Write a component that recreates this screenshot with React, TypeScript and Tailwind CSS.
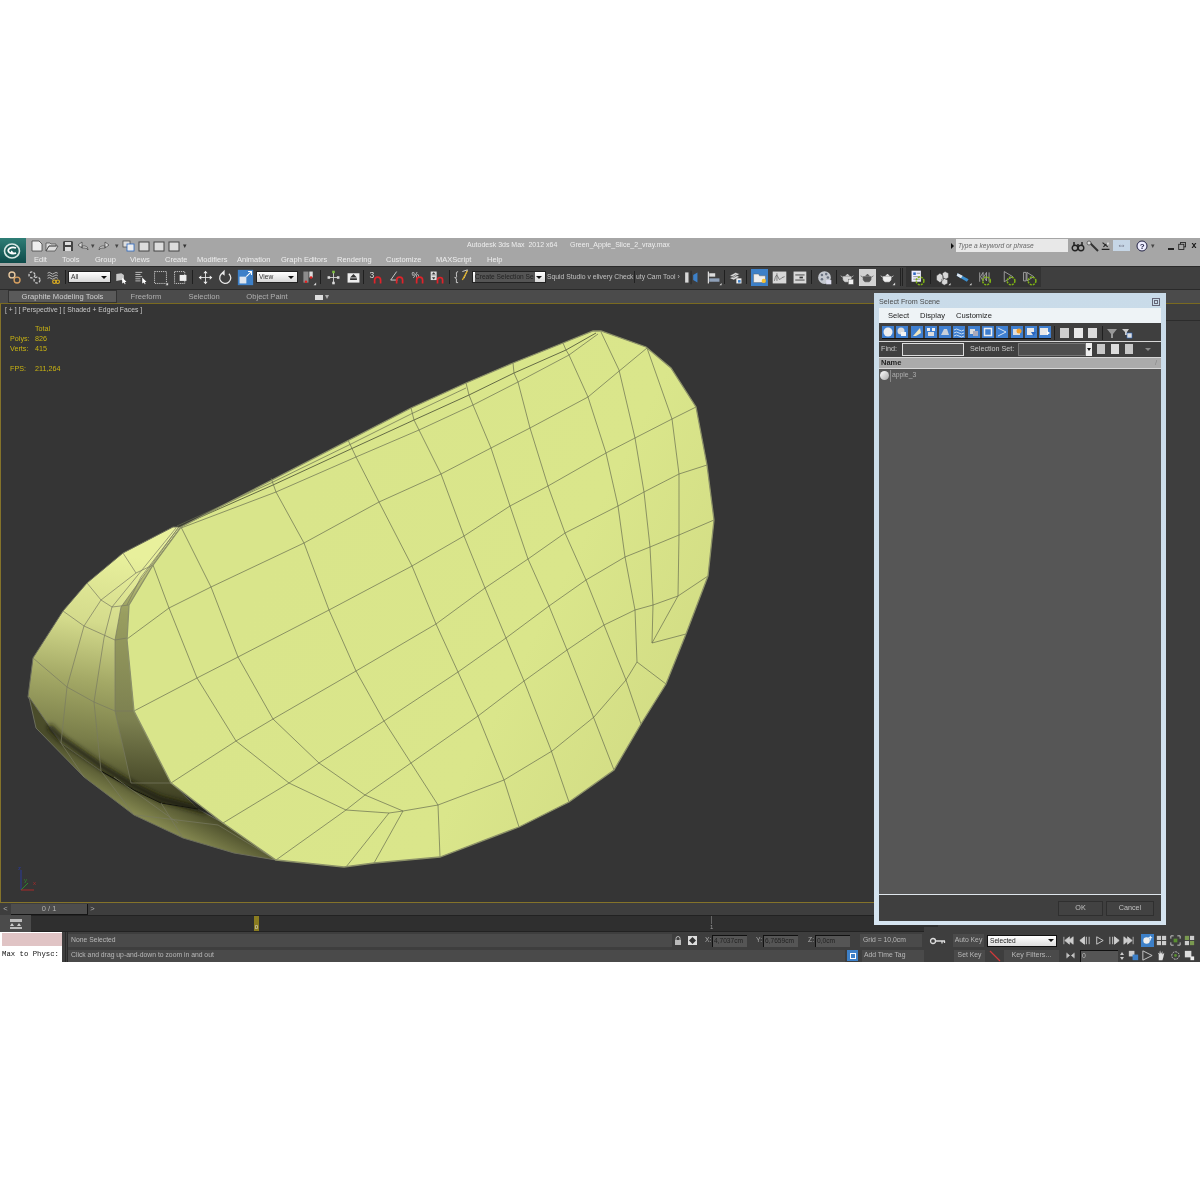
import { ReactNode } from "react"

const FRONT: [number, number][] = [[180,527],[152,565],[128,605],[126,640],[133,711],[170,783],[222,823],[275,860],[343,867],[373,863],[439,857],[518,827],[568,802],[613,770],[640,724],[665,684],[685,634],[707,576],[713,520],[706,465],[695,407],[670,368],[645,347],[600,331],[592,331],[562,343],[512,363],[465,383],[410,408]]

const WIRES = [
  "152,565 168,608 196,678 235,741 288,783 345,810 388,813 402,811",
  "180,527 210,587 237,657 272,719 318,763 364,795 402,811",
  "270,478 275,492 303,543 328,610 355,671 383,721 410,763 437,805 439,857",
  "347,440 355,457 378,502 411,566 435,624 457,672 477,716 503,780 518,827",
  "410,408 413,420 418,430 440,474 463,536 484,588 505,638 523,681 550,750 568,802",
  "465,383 468,395 472,405 490,448 509,506 527,559 548,606 566,650 592,716 613,770",
  "512,363 513,373 517,382 529,428 547,486 564,533 585,580 603,625 625,680 640,724",
  "562,343 565,350 568,355 587,397 605,453 617,506 624,557 634,610 636,662 665,684",
  "600,332 618,370 634,438 643,492 649,547 652,605 651,643 685,634",
  "646,348 671,419 678,474 678,535 677,596 651,643",
  "646,348 617,372 587,397 529,428 490,448 440,474 378,502 303,543 210,587 168,608 126,639",
  "695,407 671,419 634,438 605,453 547,486 509,506 463,536 411,566 328,610 237,657 196,678 133,711",
  "706,465 678,474 643,492 617,506 564,533 527,559 484,588 435,624 355,671 272,719 235,741 170,783",
  "713,520 678,535 649,547 624,557 585,580 548,606 505,638 457,672 383,721 318,763 288,783 222,823",
  "707,576 677,596 652,605 634,610 603,625 566,650 523,681 477,716 410,763 364,795 345,810 275,860",
  "636,662 625,680 593,717 551,751 503,780 437,805 402,811 373,863",
  "388,813 345,867",
  "180,528 275,492 355,457 418,430 472,405 517,382 568,355 597,334",
  "176,526 270,483 350,444 410,414 465,388",
]

const SIDE_WIRES = [
  "122,553 135,573 152,565",
  "86,583 100,600 111,607 128,605",
  "62,611 83,626 114,640 126,638",
  "32,658 66,687 93,702 114,711 133,711",
  "135,573 100,600 83,626 66,687 60,743",
  "175,528 111,607 103,638 93,702 100,771",
  "177,528 120,607 114,640 114,711 130,783",
  "60,743 83,777",
  "100,771 133,815",
  "113,777 177,823",
  "135,815 217,825 275,860",
  "130,783 170,783",
  "182,838 160,803",
  "178,527 140,577 126,605",
]

const pts = (list: [number, number][]) => list.map(p => p.join(",")).join(" ")

const Mesh = () => (
  <svg className="absolute left-0 top-0 h-[599px] w-[875px]" viewBox="0 304 875 599">
    <defs>
      <linearGradient id="side" gradientUnits="userSpaceOnUse" x1="118" y1="555" x2="85" y2="785">
        <stop offset="0" stopColor="#e8f09c" />
        <stop offset="0.3" stopColor="#d4db8c" />
        <stop offset="0.55" stopColor="#a4a966" />
        <stop offset="0.8" stopColor="#7a7e4a" />
        <stop offset="1" stopColor="#4a4c28" />
      </linearGradient>
      <linearGradient id="inner" gradientUnits="userSpaceOnUse" x1="150" y1="535" x2="130" y2="800">
        <stop offset="0" stopColor="#d8df8e" />
        <stop offset="0.3" stopColor="#999e60" />
        <stop offset="0.7" stopColor="#7c8050" />
        <stop offset="1" stopColor="#3c3d20" />
      </linearGradient>
      <linearGradient id="band" gradientUnits="userSpaceOnUse" x1="125" y1="775" x2="95" y2="835">
        <stop offset="0" stopColor="#4a4c2a" />
        <stop offset="0.5" stopColor="#8a8e54" />
        <stop offset="1" stopColor="#c2c87d" />
      </linearGradient>
      <linearGradient id="face" gradientUnits="userSpaceOnUse" x1="300" y1="500" x2="700" y2="700">
        <stop offset="0" stopColor="#d9e58b" />
        <stop offset="0.6" stopColor="#dae68b" />
        <stop offset="1" stopColor="#d2dc84" />
      </linearGradient>
      <filter id="soft" x="-20%" y="-20%" width="140%" height="140%">
        <feGaussianBlur stdDeviation="2.500" />
      </filter>
      <clipPath id="sideclip">
        <polygon points="172,527 122,553 86,583 62,611 32,658 27,697 35,728 83,777 133,815 182,838 233,853 275,860 222,823 170,783 133,711 126,640 128,605 152,565 180,527" />
      </clipPath>
    </defs>
    <polygon fill="url(#side)" stroke="#6c6e5c" strokeWidth="1" points="172,527 122,553 86,583 62,611 32,658 27,697 60,743 100,771 133,790 160,803 197,809 170,783 133,711 126,640 128,605 152,565 180,527" />
    <polygon fill="url(#inner)" points="177,528 152,565 128,605 126,640 133,711 170,783 197,809 160,803 130,783 114,711 114,640 120,607" />
    <polygon fill="url(#band)" stroke="#6c6e5c" strokeWidth="1" points="28,697 35,728 83,777 133,815 182,838 233,853 275,860 222,823 197,809 160,803 133,790 100,771 60,743" />
    <g clipPath="url(#sideclip)">
      <polyline points="48,726 60,738 100,766 133,786 160,799 205,811" fill="none" stroke="#1a1b0e" strokeWidth="5" filter="url(#soft)" />
      <polyline points="100,771 133,790 160,803 197,809" fill="none" stroke="#15160b" strokeWidth="1.200" />
    </g>
    {SIDE_WIRES.map(w => <polyline key={w} points={w} fill="none" stroke="#787a62" strokeWidth="0.7" />)}
    <polygon fill="url(#face)" points={pts(FRONT)} />
    <polyline points="177,527 272,485 352,448 413,420 468,395 513,373 565,350 595,333" fill="none" stroke="#474c34" strokeWidth="0.8" />
    {WIRES.map(w => <polyline key={w} points={w} fill="none" stroke="#686e50" strokeWidth="0.7" />)}
    <polygon fill="none" stroke="#8c9168" strokeWidth="1.300" points={pts(FRONT)} />
    <path d="M20 890V870" stroke="#2a3a9a" strokeWidth="1" />
    <path d="M20 890L27 883" stroke="#2c8a2c" strokeWidth="1" />
    <path d="M20 890H33" stroke="#a82a2a" strokeWidth="1" />
    <text x="17" y="870" fontSize="6" fill="#2a3a9a">z</text>
    <text x="23" y="882" fontSize="6" fill="#2c8a2c">y</text>
    <text x="32" y="885" fontSize="6" fill="#a82a2a">x</text>
  </svg>
)

const Ic = ({ children, className = "w-[20px]" }: { children: ReactNode; className?: string }) => (
  <div className={`flex h-[20px] shrink-0 items-center justify-center ${className}`}>
    <svg width="17" height="17" viewBox="0 0 20 20" className="shrink-0">{children}</svg>
  </div>
)

const Sep = ({ className = "w-[5px]" }: { className?: string }) => (
  <div className={`flex h-[14px] shrink-0 justify-center ${className}`}><div className="w-px bg-[#1f1f1f]" /></div>
)

const Drop = ({ label, className, dark }: { label: string; className: string; dark?: boolean }) => (
  <div className={`flex h-[12px] shrink-0 items-center justify-between border border-[#222] bg-gradient-to-b from-[#fff] to-[#d8d8d8] pl-[2px] pr-[3px] text-[6.600px] ${dark ? "text-[#222]" : "text-[#333]"} ${className}`}>
    <span className={dark ? "w-[60px] overflow-hidden whitespace-nowrap bg-[#555] pr-[1px] text-[#222]" : ""}>{label}</span>
    <span className="h-0 w-0 border-x-[3px] border-t-[3px] border-x-transparent border-t-[#111]" />
  </div>
)

const Magnet = ({ label }: { label: string }) => (
  <>
    <text x="3" y="10" fontSize="10" fill="#ddd">{label}</text>
    <path d="M9 17v-4a3 3 0 0 1 7 0v4" fill="none" stroke="#e0232a" strokeWidth="2" />
  </>
)

const Teapot = ({ fill = "#d4d4d4" }: { fill?: string }) => (
  <path d="M5 9h9a4 5 0 0 1-2 6H7a4 5 0 0 1-2-6zM5 10L2 8M14 10l3-2M8 8l2-2 2 2z" fill={fill} stroke={fill} strokeWidth="0.8" />
)

const Ring = ({ cx = 13, cy = 14 }: { cx?: number; cy?: number }) => (
  <circle cx={cx} cy={cy} r="4.500" fill="none" stroke="#7fb414" strokeWidth="1.800" strokeDasharray="2.400 1.200" />
)

const MainToolbar = () => (
  <div className="flex h-[24px] shrink-0 items-center border-y border-[#2a2a2a] bg-[#3f3f3f] pb-[2px] pl-[4px]">
    <Ic><circle cx="7" cy="7" r="3.500" fill="none" stroke="#e8c9a0" strokeWidth="1.600" /><circle cx="13" cy="13" r="3.500" fill="none" stroke="#d8a060" strokeWidth="1.600" /></Ic>
    <Ic><circle cx="7" cy="7" r="3.500" fill="none" stroke="#ccc" strokeWidth="1.500" strokeDasharray="3 1.500" /><circle cx="13" cy="13" r="3.500" fill="none" stroke="#ccc" strokeWidth="1.500" strokeDasharray="3 1.500" /></Ic>
    <Ic className="w-[19px]"><path d="M3 5q2-2 4 0t4 0 4 0M3 8q2-2 4 0t4 0 4 0M3 11q2-2 4 0t4 0 4 0" fill="none" stroke="#ccc" /><circle cx="11" cy="15" r="2" fill="none" stroke="#e0b020" strokeWidth="1.300" /><circle cx="15" cy="15" r="2" fill="none" stroke="#e0b020" strokeWidth="1.300" /></Ic>
    <Sep />
    <Drop label="All" className="w-[43px]" />
    <Ic className="ml-[-1px] w-[20px]"><path d="M5 6l6-1v8l-6 1zM11 5l3 2v7l-3-1z" fill="#c8c8c8" /><path d="M12 10l5 5-2 .5 1 2-1 .5-1-2-2 1z" fill="#fff" /></Ic>
    <Ic><path d="M4 4h8M4 6.500h6M4 9h8M4 11.500h6M4 14h6" stroke="#cfcfcf" /><path d="M12 10l5 5-2 .5 1 2-1 .5-1-2-2 1z" fill="#fff" /></Ic>
    <Ic><rect x="3" y="3" width="14" height="14" fill="none" stroke="#d8d8d8" strokeDasharray="1.500 1" /><path d="M16 19l3-3v3z" fill="#ddd" /></Ic>
    <Ic><rect x="3" y="3" width="12" height="14" fill="none" stroke="#d8d8d8" strokeDasharray="1.500 1" /><rect x="9" y="7" width="8" height="7" fill="#eee" /></Ic>
    <Sep />
    <Ic><path d="M10 3v14M3 10h14" stroke="#eee" /><path d="M10 2l2.500 3h-5zM10 18l2.500-3h-5zM2 10l3-2.500v5zM18 10l-3-2.500v5z" fill="#eee" /></Ic>
    <Ic><path d="M14 5.500A6.500 6.500 0 1 1 7 4.500" fill="none" stroke="#e8e8e8" strokeWidth="1.500" /><path d="M9 1v7l-4-3z" fill="#e8e8e8" /></Ic>
    <Ic className="w-[21px]"><rect x="1" y="1" width="18" height="18" fill="#3d80c8" /><rect x="3" y="9" width="8" height="8" fill="#dfe6ee" /><path d="M11 9l6-6M13 3h4v4" stroke="#fff" fill="none" strokeWidth="1.200" /></Ic>
    <Drop label="View" className="w-[42px]" />
    <Ic><rect x="4" y="3" width="6" height="13" fill="#8c8c8c" /><circle cx="7" cy="15" r="1.500" fill="#e02020" /><rect x="11" y="3" width="4" height="7" fill="#ddd" /><circle cx="13" cy="10" r="1.500" fill="#e02020" /><path d="M16 19l3-3v3z" fill="#ddd" /></Ic>
    <Sep />
    <Ic><path d="M10 4v12M4 10h12" stroke="#ddd" /><rect x="8.500" y="2" width="3" height="3" fill="#7fc040" /><rect x="3" y="8.500" width="3" height="3" fill="#ddd" /><rect x="14" y="8.500" width="3" height="3" fill="#ddd" /><rect x="8.500" y="15" width="3" height="3" fill="#ddd" /></Ic>
    <Ic><rect x="3" y="5" width="14" height="11" fill="#eee" /><path d="M10 6l4 4h-8zM6 11h8v2H6z" fill="#333" /></Ic>
    <Sep className="ml-[-1px] w-[3px]" />
    <Ic><Magnet label="3" /></Ic>
    <Ic className="ml-[2px] w-[20px]"><path d="M2 13L9 3M2 13h8" fill="none" stroke="#ddd" /><path d="M9 17v-4a3 3 0 0 1 7 0v4" fill="none" stroke="#e0232a" strokeWidth="2" /></Ic>
    <Ic><Magnet label="%" /></Ic>
    <Ic><rect x="2" y="3" width="7" height="10" fill="#ddd" /><path d="M3 7h5M5.500 4l-1.500 2h3zM5.500 12l-1.500-2h3z" stroke="#333" fill="#333" strokeWidth="0.500" /><path d="M10 17v-4a3 3 0 0 1 6 0v4" fill="none" stroke="#e0232a" strokeWidth="2" /></Ic>
    <Sep className="w-[4px]" />
    <Ic><path d="M6 3Q3 3 4 7t-2 3q3 1 2 4t2 2M11 3l6-2-4 10" fill="none" stroke="#ddd" /><path d="M17 2l-6 11" stroke="#e0b020" strokeWidth="1.500" /></Ic>
    <Drop label="Create Selection Se" dark className="ml-[1px] w-[74px]" />
    <span className="ml-[1px] w-[87px] shrink-0 whitespace-nowrap text-[6.800px] text-[#c0c0c0]">Squid Studio v elivery Check</span>
    <div className="h-[12px] w-px shrink-0 bg-[#222]" />
    <span className="w-[46px] shrink-0 whitespace-nowrap pl-[1px] text-[6.800px] text-[#c0c0c0]">uty Cam Tool ›</span>
    <Ic><rect x="2.500" y="4" width="4" height="12" fill="#d8d8d8" /><path d="M9.500 2v16" stroke="#222" /><path d="M12 7l5-3v12l-5-3z" fill="#3d80c8" /></Ic>
    <Ic className="ml-[2px] w-[20px]"><path d="M4 3v14" stroke="#ddd" strokeWidth="1.500" /><rect x="5" y="5" width="7" height="4" fill="#ddd" /><rect x="5" y="11" width="12" height="4" fill="#8ea0b8" /><path d="M17 19l2.500-2.500v2.500z" fill="#ddd" /></Ic>
    <Sep className="w-[2px]" />
    <Ic><path d="M3 8l7-4 5 2-7 4zM3 11l7-4 5 2-7 4z" fill="#d8d8d8" stroke="#333" strokeWidth="0.600" /><rect x="11" y="11" width="6" height="6" fill="#f0f0f0" /><rect x="13" y="13" width="3" height="3" fill="#3d80c8" /></Ic>
    <Sep className="w-[3px]" />
    <Ic className="w-[22px]"><rect x="-1" y="-1" width="22" height="22" fill="#3d80c8" /><path d="M3 6h6l1 2h7v8H3z" fill="#eee" stroke="#555" strokeWidth="0.500" /><circle cx="15" cy="14" r="2.500" fill="#f5c030" /></Ic>
    <Ic className="w-[18px]"><rect x="2" y="3" width="16" height="14" fill="#d8d8d8" /><path d="M4 14q2-10 4-5t3 3 5-3M7 5v9" fill="none" stroke="#555" strokeWidth="0.800" /></Ic>
    <Ic className="w-[22px]"><rect x="3" y="3" width="15" height="14" fill="#d8d8d8" /><path d="M5 7h11M5 13h11" stroke="#333" /><path d="M10 9h4v2h-4z" fill="#333" /></Ic>
    <Sep className="w-[3px]" />
    <Ic className="w-[22px]"><circle cx="10" cy="10" r="7.500" fill="#c4c8cf" /><circle cx="7" cy="7" r="1.500" fill="#6a7280" /><circle cx="12" cy="6" r="1.500" fill="#6a7280" /><circle cx="14" cy="10" r="1.500" fill="#6a7280" /><circle cx="7" cy="12" r="1.500" fill="#6a7280" /><rect x="12" y="13" width="6" height="5" fill="#dde" /></Ic>
    <Sep className="w-[2px]" />
    <Ic className="w-[20px]"><Teapot /><rect x="11" y="12" width="6" height="6" fill="#f0f0f0" stroke="#555" strokeWidth="0.500" /></Ic>
    <Ic><rect x="0" y="0" width="20" height="20" fill="#d2d2d2" /><Teapot fill="#555" /></Ic>
    <Ic><Teapot fill="#eee" /><path d="M16 19l3-3v3z" fill="#ddd" /></Ic>
    <div className="ml-[3px] mr-[3px] h-[18px] w-[3px] shrink-0 border-x border-[#222]" />
    <div className="flex h-[20px] items-center bg-[#333] pl-[1px] pr-[2px]">
      <Ic className="w-[21px]"><rect x="3" y="2" width="11" height="13" fill="#eef" /><rect x="5" y="4" width="3" height="3" fill="#2a66c0" /><path d="M9 5h4M5 9h8M5 12h8" stroke="#888" /><Ring /></Ic>
      <Sep className="w-[4px]" />
      <Ic className="w-[21px]"><path d="M3 8l4-3 4 3v5l-4 3-4-3zM10 5l3-2 4 2v5l-3 2-4-2zM9 12l3-1 4 2v4l-4 2-3-2z" fill="#d8d8d8" stroke="#333" strokeWidth="0.500" /><path d="M17 19l2.500-2.500v2.500z" fill="#ddd" /></Ic>
      <Ic className="w-[21px]"><path d="M3 5l13 7-2 3L2 8z" fill="#3b8fd0" /><path d="M3 5L2 8l5 3 2-3z" fill="#dfe6ee" /><path d="M17 19l2.500-2.500v2.500z" fill="#ddd" /></Ic>
      <Ic className="w-[24px]"><path d="M2 4v11M6 4l-3 5 3 5zM10 4L7 9l3 5zM13 4v11" fill="none" stroke="#aaa" /><Ring cx={10} cy={14} /></Ic>
      <Ic className="w-[21px]"><path d="M5 3l10 6-10 6z" fill="none" stroke="#aaa" /><Ring /></Ic>
      <Ic className="w-[20px]"><path d="M3 4v10h3V4zM7 4v10l8-5z" fill="none" stroke="#aaa" /><Ring /></Ic>
    </div>
  </div>
)

const QuickIcon = ({ children, className = "w-[15px]" }: { children: ReactNode; className?: string }) => (
  <div className={`flex shrink-0 justify-center ${className}`}>
    <svg width="14" height="12" viewBox="0 0 14 12">{children}</svg>
  </div>
)

const MENU = [
  ["Edit", "w-[28px]"], ["Tools", "w-[33px]"], ["Group", "w-[35px]"], ["Views", "w-[35px]"], ["Create", "w-[32px]"], ["Modifiers", "w-[40px]"],
  ["Animation", "w-[44px]"], ["Graph Editors", "w-[56px]"], ["Rendering", "w-[49px]"], ["Customize", "w-[50px]"], ["MAXScript", "w-[51px]"], ["Help", "w-[30px]"],
]

const TitleArea = () => (
  <div className="flex h-[28px] shrink-0 bg-[#a6a6a6]">
    <div className="relative flex h-[25px] w-[26px] shrink-0 items-center justify-center bg-gradient-to-b from-[#2f7e76] to-[#0d4b4a]">
      <svg width="20" height="18" viewBox="0 0 20 18">
        <ellipse cx="9" cy="9" rx="7.500" ry="7" fill="#1c5f5a" stroke="#d8e8e4" strokeWidth="1.600" />
        <path d="M13 6a5 3 0 1 0 0 5c-2 1-5 0-4-2" fill="none" stroke="#fff" strokeWidth="1.800" />
      </svg>
    </div>
    <div className="flex min-w-0 flex-1 flex-col">
      <div className="flex h-[15px] items-center pl-[4px]">
        <QuickIcon className="w-[14px]"><path d="M2 1h7l3 3v7H2z" fill="#eee" stroke="#444" strokeWidth="0.800" /></QuickIcon>
        <QuickIcon className="w-[16px]"><path d="M1 3h4l1 1h5v2H4l-3 5zM4 6h9l-3 5H1z" fill="#ddd" stroke="#444" strokeWidth="0.700" /></QuickIcon>
        <QuickIcon className="w-[15px]"><path d="M3 1h8l1 1v9H2V2z" fill="#444" /><rect x="4" y="2" width="6" height="3" fill="#ddd" /><rect x="4" y="7" width="6" height="4" fill="#ddd" /></QuickIcon>
        <QuickIcon className="w-[15px]"><path d="M6 2L2 5l4 3V6h3q3 0 3 4-1-2-3-2H6z" fill="#ddd" stroke="#444" strokeWidth="0.700" /></QuickIcon>
        <span className="w-[6px] shrink-0 text-center text-[7px] leading-none text-[#444]">▾</span>
        <QuickIcon className="w-[16px]"><path d="M8 2l4 3-4 3V6H5q-3 0-3 4 1-2 3-2h3z" fill="#ddd" stroke="#444" strokeWidth="0.700" /></QuickIcon>
        <span className="w-[9px] shrink-0 text-center text-[7px] leading-none text-[#444]">▾</span>
        <QuickIcon className="w-[15px]"><rect x="1" y="1" width="7" height="6" fill="#ddd" stroke="#444" strokeWidth="0.700" /><rect x="5" y="4" width="7" height="7" fill="#eee" stroke="#2a66c0" strokeWidth="0.800" /></QuickIcon>
        <QuickIcon><rect x="2" y="2" width="10" height="9" fill="#ddd" stroke="#444" /></QuickIcon>
        <QuickIcon><rect x="2" y="2" width="10" height="9" fill="#ddd" stroke="#444" /></QuickIcon>
        <QuickIcon><rect x="2" y="2" width="10" height="9" fill="#ddd" stroke="#444" /></QuickIcon>
        <span className="w-[8px] shrink-0 text-center text-[7px] leading-none text-[#333]">▾</span>
        <span className="ml-[278px] w-[103px] shrink-0 whitespace-pre text-[7px] text-[#eee]">Autodesk 3ds Max  2012 x64</span>
        <span className="w-[250px] shrink-0 whitespace-nowrap text-[7px] text-[#eee]">Green_Apple_Slice_2_vray.max</span>
        <span className="ml-[131px] h-0 w-0 shrink-0 border-y-[3px] border-l-[3px] border-y-transparent border-l-[#111]" />
        <div className="ml-[2px] flex h-[13px] w-[112px] shrink-0 items-center bg-[#e8e8e8] pl-[2px] text-[6.600px] italic text-[#666]">Type a keyword or phrase</div>
        <QuickIcon className="ml-[2px] w-[15px]"><circle cx="4" cy="8" r="2.800" fill="none" stroke="#222" strokeWidth="1.400" /><circle cx="10" cy="8" r="2.800" fill="none" stroke="#222" strokeWidth="1.400" /><path d="M3 2v4M11 2v4M6 5h2" stroke="#222" strokeWidth="1.500" /></QuickIcon>
        <QuickIcon><path d="M3 2l2 2 7 7" stroke="#333" strokeWidth="2" /><circle cx="3" cy="3" r="2" fill="#ddd" stroke="#333" strokeWidth="0.600" /></QuickIcon>
        <QuickIcon className="w-[12px]"><path d="M3 2l6 5M9 2L4 7M2 10h9" stroke="#222" strokeWidth="1.300" /><circle cx="9" cy="3" r="1.500" fill="#ddd" /></QuickIcon>
        <div className="ml-[1px] flex h-[11px] w-[17px] shrink-0 items-center justify-center bg-[#c6d6e6] text-[9px] leading-none text-[#667]">⇔</div>
        <QuickIcon className="ml-[5px] w-[14px]"><circle cx="7" cy="6" r="5" fill="#eef" stroke="#224" /><text x="4.800" y="9" fontSize="8" fontWeight="bold" fill="#224">?</text></QuickIcon>
        <span className="w-[8px] shrink-0 text-center text-[7px] leading-none text-[#444]">▾</span>
        <span className="ml-[11px] mt-[6px] h-[2px] w-[6px] shrink-0 bg-[#222]" />
        <QuickIcon className="ml-[3px] w-[12px]"><rect x="4" y="2" width="6" height="5" fill="none" stroke="#222" /><rect x="2" y="4" width="6" height="6" fill="#a6a6a6" stroke="#222" /></QuickIcon>
        <span className="w-[10px] shrink-0 text-center text-[9px] font-bold leading-none text-[#111]">x</span>
      </div>
      <div className="flex h-[13px] items-center pl-[8px] text-[7.500px] text-[#eee]">
        {MENU.map(([m, w]) => <span key={m} className={`shrink-0 whitespace-nowrap ${w}`}>{m}</span>)}
      </div>
    </div>
  </div>
)

const Ribbon = () => (
  <div className="flex h-[14px] shrink-0 items-end border-b border-[#7a6a20] bg-[#4b4b4b] pl-[8px] text-[7.600px] text-[#b0b0b0]">
    <div className="flex h-[13px] w-[109px] shrink-0 items-center justify-center border border-[#333] bg-[#5a5a5a] text-[#d0d0d0]">Graphite Modeling Tools</div>
    <span className="flex h-[13px] w-[58px] shrink-0 items-center justify-center">Freeform</span>
    <span className="flex h-[13px] w-[58px] shrink-0 items-center justify-center">Selection</span>
    <span className="flex h-[13px] w-[68px] shrink-0 items-center justify-center">Object Paint</span>
    <span className="ml-[14px] h-[13px] shrink-0 leading-[13px]">
      <span className="inline-block h-[5px] w-[8px] bg-[#ddd] align-middle" /> ▾
    </span>
  </div>
)

const Viewport = () => (
  <div className="relative min-w-0 flex-1 overflow-hidden border-b border-l border-[#84732a] bg-[#353535]">
    <Mesh />
    <div className="absolute left-[4px] top-[1px] whitespace-nowrap text-[6.800px] text-[#c8c8c8]">[ + ] [ Perspective ] [ Shaded + Edged Faces ]</div>
    <div className="absolute left-[9px] top-[20px] grid grid-cols-[25px_auto] text-[7.200px] leading-[10px] text-[#c9b312]">
      <span /><span>Total</span>
      <span>Polys:</span><span>826</span>
      <span>Verts:</span><span>415</span>
      <span className="h-[10px]" /><span />
      <span>FPS:</span><span>211,264</span>
    </div>
  </div>
)

const BLUE_BTNS: ReactNode[] = [
  <circle key="a" cx="6" cy="6" r="4.500" fill="#eee" />,
  <g key="b"><circle cx="5" cy="5" r="3.500" fill="#ddd" /><rect x="5" y="6" width="5" height="4" fill="#f4f4f4" /></g>,
  <path key="c" d="M2 10L9 2l1 5-5 3z" fill="#efe6c0" />,
  <g key="d"><rect x="2" y="2" width="3" height="3" fill="#eee" /><rect x="7" y="2" width="3" height="3" fill="#eee" /><rect x="3" y="6" width="6" height="4" fill="#ddd" /></g>,
  <path key="e" d="M2 9l3-6h3l2 6z" fill="#c8d0da" />,
  <path key="f" d="M1 4q2.500-2 5 0t5 0M1 7q2.500-2 5 0t5 0M1 10q2.500-2 5 0t5 0" fill="none" stroke="#c8dcf0" />,
  <g key="g"><rect x="2" y="3" width="5" height="5" fill="#ddd" /><rect x="5" y="5" width="5" height="5" fill="#aab" /></g>,
  <rect key="h" x="2.500" y="2.500" width="7" height="7" fill="none" stroke="#eee" strokeWidth="1.500" />,
  <path key="i" d="M2 2l8 4-8 4" fill="none" stroke="#d8e4f0" />,
  <g key="j"><path d="M2 3h7v6H2z" fill="#ddd" /><circle cx="8" cy="5" r="2.500" fill="#f0a030" /></g>,
  <g key="k"><rect x="2" y="2" width="7" height="7" fill="#e8e8e8" /><path d="M6 6h5l-2.500 4z" fill="#2a66c0" /></g>,
  <g key="l"><rect x="1" y="2" width="8" height="7" fill="#e8e8e8" /><path d="M8 5l3 2-3 2z" fill="#fff" /></g>,
]

const SelectDialog = () => (
  <div className="absolute left-[874px] top-[55px] z-10 flex h-[632px] w-[292px] flex-col bg-gradient-to-b from-[#c9dbe9] to-[#d5e4f0] px-[5px] pb-[4px]">
    <div className="flex h-[15px] shrink-0 items-center justify-between pr-[1px] pt-[3px] text-[7.200px] text-[#4a4a4a]">
      <span>Select From Scene</span>
      <span className="flex h-[8px] w-[8px] items-center justify-center border border-[#667]"><span className="h-[4px] w-[4px] border border-[#667]" /></span>
    </div>
    <div className="flex h-[15px] shrink-0 items-center gap-[11px] bg-[#eef3f6] pl-[9px] text-[7.600px] text-[#222]">
      <span>Select</span><span>Display</span><span>Customize</span>
    </div>
    <div className="flex h-[18px] shrink-0 items-center bg-[#3f3f3f] pl-[3px] pt-[1px]">
      <div className="flex gap-[2.300px] border-b border-[#111]">
        {BLUE_BTNS.map((b, i) => (
          <div key={i} className="flex h-[12px] w-[12px] items-center justify-center bg-[#3f7fd0]">
            <svg width="12" height="12" viewBox="0 0 12 12">{b}</svg>
          </div>
        ))}
      </div>
      <Sep className="ml-[1px] w-[4px]" />
      <div className="ml-[4px] flex gap-[5px]">
        <div className="h-[10px] w-[9px] bg-[#cfcfcf]" />
        <div className="h-[10px] w-[9px] bg-[#e8e8e8]" />
        <div className="h-[10px] w-[9px] bg-[#dcdcdc]" />
      </div>
      <Sep className="ml-[3px] w-[4px]" />
      <svg className="ml-[2px]" width="12" height="12" viewBox="0 0 12 12"><path d="M1 2h10L7 7v4H5V7z" fill="#999" /></svg>
      <svg className="ml-[3px]" width="12" height="12" viewBox="0 0 12 12"><path d="M1 2h7L6 5v3H4V5z" fill="#ccc" /><rect x="6" y="6" width="5" height="5" fill="#ddd" stroke="#2a66c0" strokeWidth="0.600" /></svg>
    </div>
    <div className="flex h-[16px] shrink-0 items-center border-t border-[#d8d8d8] bg-[#3f3f3f] pb-[1px] pl-[2px] text-[7.200px] text-[#c8c8c8]">
      <span className="w-[21px] shrink-0">Find:</span>
      <div className="h-[13px] w-[62px] shrink-0 border border-[#ddd] bg-[#4f4f4f]" />
      <span className="ml-[6px] w-[48px] shrink-0 whitespace-nowrap">Selection Set:</span>
      <div className="h-[13px] w-[68px] shrink-0 border border-[#777] bg-[#4f4f4f]" />
      <div className="flex h-[13px] w-[6px] shrink-0 items-center justify-center bg-[#eee]"><span className="h-0 w-0 border-x-[2px] border-t-[3px] border-x-transparent border-t-[#111]" /></div>
      <div className="ml-[5px] flex gap-[6px]">
        <div className="h-[10px] w-[8px] bg-[#c8c8c8]" />
        <div className="h-[10px] w-[8px] bg-[#dcdcdc]" />
        <div className="h-[10px] w-[8px] bg-[#c8c8c8]" />
      </div>
      <span className="ml-[12px] h-0 w-0 border-x-[3px] border-t-[3px] border-x-transparent border-t-[#888]" />
    </div>
    <div className="flex h-[12px] shrink-0 items-center justify-between border-y border-[#d8d8d8] bg-[#ababab] pl-[2px] pr-[4px] text-[7.500px] font-bold text-[#222]">
      <span>Name</span><span className="font-normal text-[#888]">/</span>
    </div>
    <div className="flex min-h-0 flex-1 flex-col border-b border-[#dfe6ec] bg-[#565656]">
      <div className="flex h-[13px] items-center pl-[1px] text-[6.800px] text-[#aeaeae]">
        <span className="h-[9px] w-[9px] rounded-full bg-gradient-to-br from-[#fff] to-[#aaa]" />
        <span className="ml-[1px] h-[12px] w-px bg-[#888]" />
        <span className="ml-[1px]">apple_3</span>
      </div>
    </div>
    <div className="flex h-[26px] shrink-0 items-center justify-end gap-[3px] bg-[#3f3f3f] pr-[7px] text-[7.200px] text-[#c0c0c0]">
      <div className="flex h-[15px] w-[45px] items-center justify-center border border-[#2f2f2f] bg-[#424242]">OK</div>
      <div className="flex h-[15px] w-[48px] items-center justify-center border border-[#2f2f2f] bg-[#424242]">Cancel</div>
    </div>
  </div>
)

const Transport = ({ children, className = "w-[13px]" }: { children: ReactNode; className?: string }) => (
  <div className={`flex shrink-0 justify-center ${className}`}>
    <svg width="13" height="13" viewBox="0 0 14 14">{children}</svg>
  </div>
)

const Field = ({ label, value, className }: { label: string; value: string; className: string }) => (
  <>
    <span className={`shrink-0 text-[#aaa] ${className}`}>{label}</span>
    <div className="flex h-[12px] w-[35px] shrink-0 items-center overflow-hidden border-l border-t border-[#111] bg-[#555] pl-[1px] text-[6.600px] text-[#222]">{value}</div>
  </>
)

const BottomBars = () => (
  <div className="flex h-[59px] shrink-0 flex-col bg-[#3e3e3e]">
    <div className="flex h-[12px] shrink-0 items-center text-[7.500px] text-[#b0b0b0]">
      <span className="w-[11px] shrink-0 text-center">&lt;</span>
      <div className="flex h-[11px] w-[77px] shrink-0 items-center justify-center border-b border-r border-[#151515] bg-[#4d4d4d]">0 / 1</div>
      <span className="w-[9px] shrink-0 text-center">&gt;</span>
    </div>
    <div className="flex h-[17px] shrink-0">
      <div className="flex w-[31px] shrink-0 items-center justify-center bg-[#4b4b4b]">
        <svg width="14" height="12" viewBox="0 0 14 12"><rect x="1" y="1" width="12" height="3" fill="#bbb" /><rect x="1" y="9" width="12" height="2" fill="#bbb" /><path d="M3 5l2 3H1zM10 5l2 3H8z" fill="#ccc" /></svg>
      </div>
      <div className="flex w-[907px] shrink-0 items-start border-y border-[#222] bg-[#2f2f2f]">
        <div className="ml-[223px] flex h-[15px] w-[5px] items-end justify-center bg-[#8a7c20] text-[6px] leading-[8px] text-[#ddd]">0</div>
        <div className="ml-[451px] flex h-[15px] flex-col items-center text-[6px] leading-[6px] text-[#999]">
          <span className="h-[8px] w-px bg-[#666]" /><span>1</span>
        </div>
      </div>
    </div>
    <div className="flex h-[30px] shrink-0">
      <div className="flex w-[62px] shrink-0 flex-col bg-white pl-[2px] pt-[1px]">
        <div className="h-[13px] bg-[#e0c4c5]" />
        <div className="mt-[3px] whitespace-nowrap font-['Liberation_Mono',monospace] text-[7.300px] leading-[10px] text-[#111]">Max to Physc:</div>
      </div>
      <div className="ml-[3px] w-[3px] shrink-0 border-x border-[#2a2a2a]" />
      <div className="flex min-w-0 flex-1 flex-col gap-[2px] pt-[2px] text-[6.800px] text-[#b8b8b8]">
        <div className="flex h-[13px] items-center">
          <div className="flex h-[13px] w-[604px] shrink-0 items-center bg-[#4a4a4a] pl-[3px]">None Selected</div>
          <svg className="ml-[2px] shrink-0" width="8" height="10" viewBox="0 0 8 10"><rect x="1" y="4" width="6" height="5" fill="#bbb" /><path d="M2 4V2.500a2 2 0 0 1 4 0V4" fill="none" stroke="#bbb" /></svg>
          <svg className="ml-[5px] shrink-0" width="11" height="11" viewBox="0 0 11 11"><rect x="1" y="1" width="9" height="9" fill="#ddd" /><path d="M5.500 2l3.500 3.500-3.500 3.500-3.500-3.500z" fill="#333" /></svg>
          <Field label="X:" value="4,7037cm" className="ml-[7px] w-[7px]" />
          <Field label="Y:" value="6,7659cm" className="ml-[9px] w-[7px]" />
          <Field label="Z:" value="0,0cm" className="ml-[10px] w-[7px]" />
          <div className="ml-[10px] flex h-[13px] w-[62px] shrink-0 items-center bg-[#4a4a4a] pl-[3px]">Grid = 10,0cm</div>
          <div className="ml-[2px] flex h-[28px] w-[28px] shrink-0 items-center justify-center bg-[#3e3e3e]">
            <svg width="18" height="10" viewBox="0 0 18 10"><circle cx="4" cy="5" r="2.500" fill="none" stroke="#ddd" strokeWidth="1.300" /><path d="M6.500 5H16M13 5v2.500M15.500 5v2" stroke="#ddd" strokeWidth="1.300" /></svg>
          </div>
          <div className="ml-[1px] flex h-[13px] w-[31px] shrink-0 items-center justify-center whitespace-nowrap bg-[#4a4a4a]">Auto Key</div>
          <div className="ml-[3px] flex h-[12px] w-[70px] shrink-0 items-center justify-between border border-[#111] bg-gradient-to-b from-[#fff] to-[#ddd] px-[2px] text-[6.600px] text-[#222]">
            <span>Selected</span><span className="h-0 w-0 border-x-[3px] border-t-[3px] border-x-transparent border-t-[#111]" />
          </div>
          <div className="ml-[4px] flex w-[75px] shrink-0 items-center">
            <Transport className="w-[15px]"><path d="M2 3v8M8 3L3 7l5 4zM12 3L7 7l5 4z" fill="#ccc" stroke="#ccc" strokeWidth="0.800" /></Transport>
            <Transport className="w-[16px]"><path d="M7 3L2 7l5 4zM9 3v8M12 3v8" fill="#ccc" stroke="#ccc" /></Transport>
            <Transport className="w-[15px]"><path d="M4 3l7 4-7 4z" fill="none" stroke="#ccc" /></Transport>
            <Transport className="w-[14px]"><path d="M2 3v8M5 3v8M7 3l5 4-5 4z" fill="#ccc" stroke="#ccc" /></Transport>
            <Transport className="w-[15px]"><path d="M12 3v8M6 3l5 4-5 4zM2 3l5 4-5 4z" fill="#ccc" stroke="#ccc" strokeWidth="0.800" /></Transport>
          </div>
          <div className="ml-[5px] flex shrink-0 items-center gap-[1px]">
            <Transport><rect width="14" height="14" fill="#3d80c8" /><circle cx="6" cy="7" r="3.500" fill="#eee" /><path d="M10 2v5M8 4h4" stroke="#fff" /></Transport>
            <Transport><rect x="2" y="2" width="4.500" height="4.500" fill="#ccc" /><rect x="7.500" y="2" width="4.500" height="4.500" fill="#ccc" /><rect x="2" y="7.500" width="4.500" height="4.500" fill="#ccc" /><rect x="7.500" y="7.500" width="4.500" height="4.500" fill="#ccc" /></Transport>
            <Transport><path d="M2 5V2h3M9 2h3v3M12 9v3H9M5 12H2V9" fill="none" stroke="#ccc" /><rect x="5" y="5" width="4" height="4" fill="#5a9030" /></Transport>
            <Transport><rect x="2" y="2" width="4.500" height="4.500" fill="#7a9a50" /><rect x="7.500" y="2" width="4.500" height="4.500" fill="#ccc" /><rect x="2" y="7.500" width="4.500" height="4.500" fill="#ccc" /><rect x="7.500" y="7.500" width="4.500" height="4.500" fill="#7a9a50" /></Transport>
          </div>
        </div>
        <div className="flex h-[13px] items-center">
          <div className="flex h-[12px] w-[777px] shrink-0 items-center bg-[#4a4a4a] pl-[3px]">Click and drag up-and-down to zoom in and out</div>
          <div className="ml-[2px] flex h-[11px] w-[11px] shrink-0 items-center justify-center bg-[#3d80c8]"><span className="h-[6px] w-[6px] border border-white" /></div>
          <div className="ml-[4px] flex h-[12px] w-[62px] shrink-0 items-center bg-[#4a4a4a] pl-[2px]">Add Time Tag</div>
          <div className="ml-[30px] flex h-[12px] w-[31px] shrink-0 items-center justify-center whitespace-nowrap bg-[#4a4a4a]">Set Key</div>
          <svg className="ml-[3px] shrink-0" width="14" height="12" viewBox="0 0 14 12"><path d="M2 1l10 10" stroke="#d03a3a" strokeWidth="1.300" /></svg>
          <div className="ml-[2px] flex h-[12px] w-[55px] shrink-0 items-center justify-center whitespace-nowrap bg-[#4a4a4a] text-[7.200px]">Key Filters...</div>
          <Transport className="ml-[4px] w-[14px]"><path d="M3 4v6M11 4v6M6 7L3.500 5v4zM8 7l2.500-2v4z" fill="#ccc" stroke="#ccc" strokeWidth="0.700" /></Transport>
          <div className="ml-[3px] flex h-[12px] w-[38px] shrink-0 items-center border-l border-t border-[#111] bg-[#555] pl-[1px] text-[#bbb]">0</div>
          <div className="flex w-[8px] shrink-0 flex-col items-center gap-[2px]">
            <span className="h-0 w-0 border-x-[2px] border-b-[3px] border-x-transparent border-b-[#ccc]" />
            <span className="h-0 w-0 border-x-[2px] border-t-[3px] border-x-transparent border-t-[#ccc]" />
          </div>
          <div className="ml-[1px] flex shrink-0 items-center gap-[1px]">
            <Transport><rect x="2" y="2" width="6" height="6" fill="#ccc" /><rect x="6" y="6" width="6" height="6" fill="#3d80c8" /></Transport>
            <Transport><path d="M2 2l10 5-10 5z" fill="none" stroke="#ccc" /></Transport>
            <Transport><path d="M4 12V6l-1-2 2 1V2l1 3V1l1 4 1-3v4l2-2-1 5-1 3z" fill="#ddd" /></Transport>
            <Transport><circle cx="7" cy="7" r="4" fill="none" stroke="#ccc" strokeDasharray="2 1" /><circle cx="7" cy="7" r="1.500" fill="#5a9030" /></Transport>
            <Transport><rect x="2" y="2" width="7" height="7" fill="#ddd" /><rect x="8" y="8" width="4" height="4" fill="#eee" /></Transport>
          </div>
        </div>
      </div>
    </div>
  </div>
)

export default function App() {
  return (
    <div className="flex h-[1200px] w-[1200px] flex-col overflow-hidden bg-white font-['Liberation_Sans',Arial,sans-serif]">
      <div className="h-[238px] shrink-0" />
      <div className="relative flex h-[724px] shrink-0 flex-col bg-[#3e3e3e] blur-[0.3px]">
        <TitleArea />
        <MainToolbar />
        <Ribbon />
        <div className="flex min-h-0 flex-1">
          <Viewport />
          <div className="w-[325px] shrink-0 bg-[#3e3e3e]">
            <div className="ml-[290px] mt-[16px] h-px bg-[#2c2c2c]" />
          </div>
        </div>
        <BottomBars />
        <SelectDialog />
      </div>
    </div>
  )
}
